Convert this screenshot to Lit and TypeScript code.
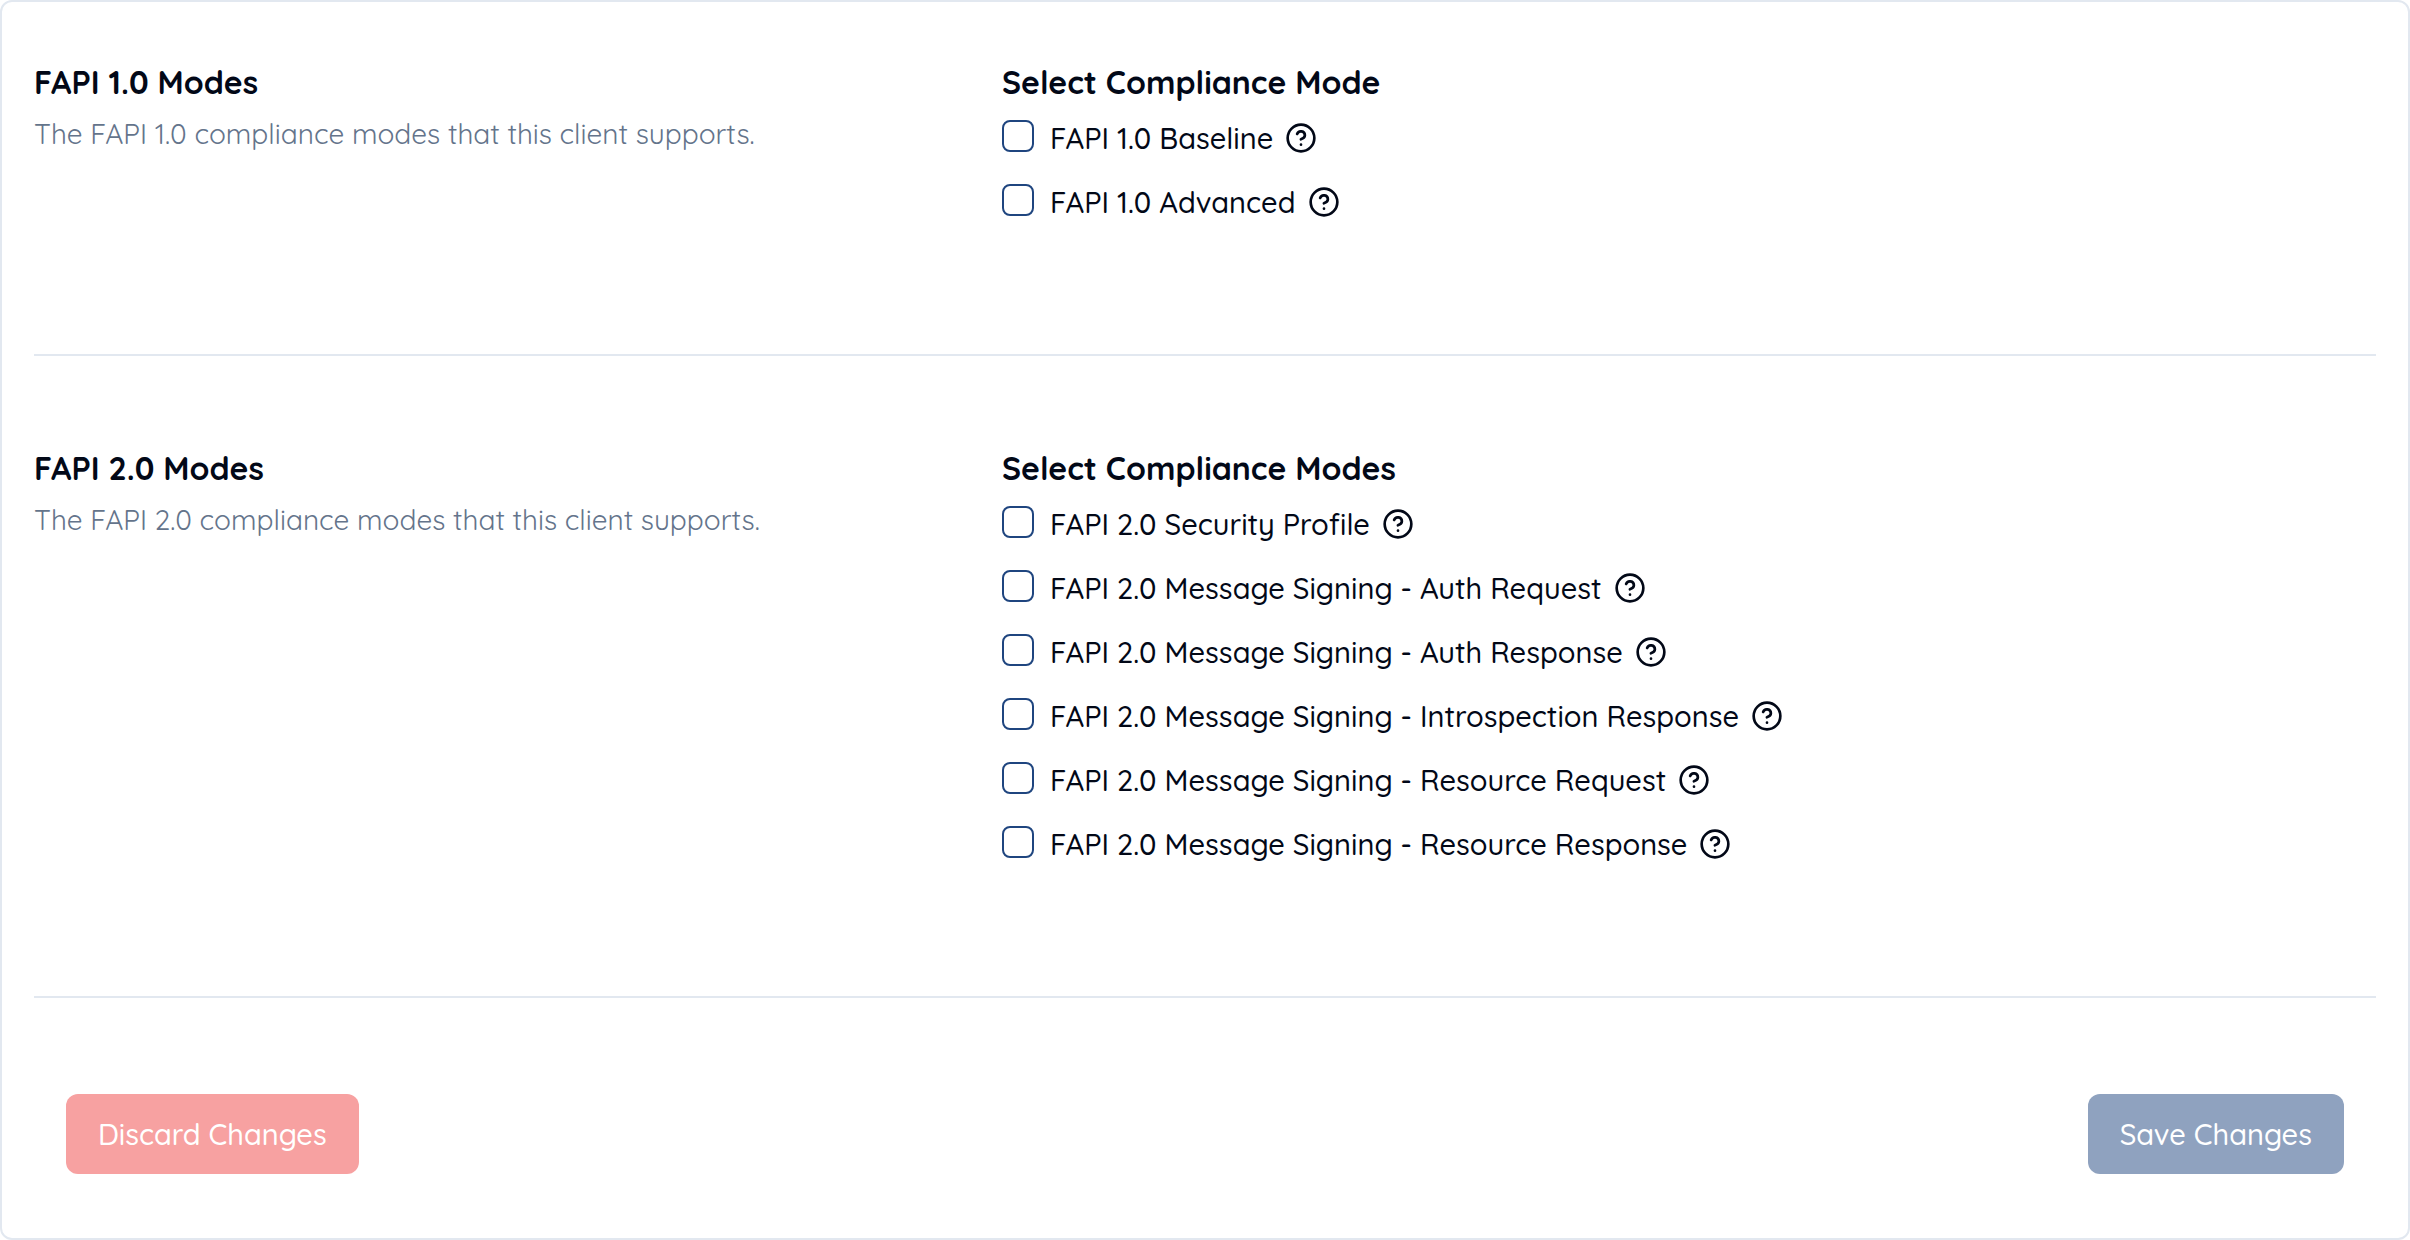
import { LitElement, html, css } from "lit";
import { customElement, property } from "lit/decorators.js";

interface Mode {
  id: string;
  label: string;
}

interface ModeGroup {
  title: string;
  description: string;
  legend: string;
  modes: Mode[];
}

const groups: ModeGroup[] = [
  {
    title: "FAPI 1.0 Modes",
    description: "The FAPI 1.0 compliance modes that this client supports.",
    legend: "Select Compliance Mode",
    modes: [
      { id: "fapi1-baseline", label: "FAPI 1.0 Baseline" },
      { id: "fapi1-advanced", label: "FAPI 1.0 Advanced" },
    ],
  },
  {
    title: "FAPI 2.0 Modes",
    description: "The FAPI 2.0 compliance modes that this client supports.",
    legend: "Select Compliance Modes",
    modes: [
      { id: "fapi2-security", label: "FAPI 2.0 Security Profile" },
      { id: "fapi2-auth-request", label: "FAPI 2.0 Message Signing - Auth Request" },
      { id: "fapi2-auth-response", label: "FAPI 2.0 Message Signing - Auth Response" },
      { id: "fapi2-introspection", label: "FAPI 2.0 Message Signing - Introspection Response" },
      { id: "fapi2-resource-request", label: "FAPI 2.0 Message Signing - Resource Request" },
      { id: "fapi2-resource-response", label: "FAPI 2.0 Message Signing - Resource Response" },
    ],
  },
];

@customElement("mode-option")
class ModeOption extends LitElement {
  @property({ attribute: false }) mode!: Mode;

  static styles = css`
    :host {
      display: flex;
      align-items: flex-start;
      gap: 16px;
    }
    .box {
      appearance: none;
      flex: none;
      box-sizing: border-box;
      width: 32px;
      height: 32px;
      margin: 0;
      border: 2px solid #1f457f;
      border-radius: 8px;
      background: #ffffff;
    }
    .box:checked {
      background: #1f457f;
    }
    .text {
      display: flex;
      align-items: center;
      gap: 12px;
      padding-top: 2px;
    }
    .label {
      font-size: 29px;
      font-weight: 500;
      line-height: 32px;
    }
    .help {
      display: block;
      flex: none;
      width: 32px;
      height: 32px;
      padding: 0;
      border: 0;
      background: none;
      color: inherit;
    }
    .icon {
      display: block;
      width: 32px;
      height: 32px;
      fill: none;
      stroke: currentColor;
      stroke-width: 2;
      stroke-linecap: round;
      stroke-linejoin: round;
    }
  `;

  render() {
    return html`
      <input class="box" type="checkbox" id=${this.mode.id} />
      <div class="text">
        <label class="label" for=${this.mode.id}>${this.mode.label}</label>
        <button class="help" type="button">
          <svg class="icon" viewBox="0 0 24 24" aria-hidden="true">
            <circle cx="12" cy="12" r="10"></circle>
            <path d="M9.09 9a3 3 0 0 1 5.83 1c0 2-3 3-3 3"></path>
            <path d="M12 17h.01"></path>
          </svg>
        </button>
      </div>
    `;
  }
}

@customElement("app-root")
class AppRoot extends LitElement {
  static styles = css`
    :host {
      display: block;
      background: #ffffff;
      color: #020817;
      font-family: Quicksand, Lato, sans-serif;
    }
    .card {
      border: 2px solid #e2e8f0;
      border-radius: 12px;
      padding: 0 32px;
    }
    .group {
      display: grid;
      grid-template-columns: repeat(5, minmax(0, 1fr));
      column-gap: 78px;
      padding: 96px 0 136px;
      border-bottom: 2px solid #e2e8f0;
    }
    .group:first-child {
      padding-top: 64px;
    }
    .intro {
      grid-column: span 2;
    }
    .choices {
      grid-column: span 3;
    }
    .title {
      margin: 0;
      font-size: 32px;
      font-weight: 700;
      line-height: 32px;
    }
    .description {
      margin: 16px 0 0;
      color: #64748b;
      font-size: 28px;
      font-weight: 400;
      line-height: 40px;
    }
    .list {
      display: flex;
      flex-direction: column;
      gap: 30px;
      margin-top: 22px;
    }
    .actions {
      display: flex;
      justify-content: space-between;
      padding: 96px 32px 64px;
    }
    .action {
      height: 80px;
      padding: 0 32px;
      border: 0;
      border-radius: 12px;
      color: #ffffff;
      font-family: inherit;
      font-size: 29px;
      font-weight: 500;
      line-height: 40px;
    }
    .discard {
      background: #f7a1a1;
    }
    .save {
      background: #8fa2bf;
    }
  `;

  render() {
    return html`
      <form class="card">
        ${groups.map(
          (group) => html`
            <section class="group">
              <div class="intro">
                <h2 class="title">${group.title}</h2>
                <p class="description">${group.description}</p>
              </div>
              <div class="choices">
                <h3 class="title">${group.legend}</h3>
                <div class="list">
                  ${group.modes.map((mode) => html`<mode-option .mode=${mode}></mode-option>`)}
                </div>
              </div>
            </section>
          `,
        )}
        <div class="actions">
          <button class="action discard" type="button">Discard Changes</button>
          <button class="action save" type="button">Save Changes</button>
        </div>
      </form>
    `;
  }
}
